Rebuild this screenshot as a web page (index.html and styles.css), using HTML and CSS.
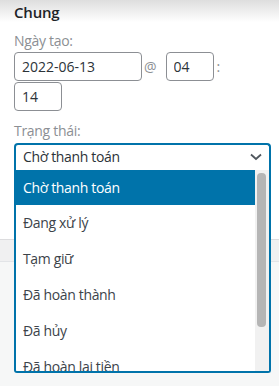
FILE: index.html
```html
<!DOCTYPE html>
<html lang="vi">
<head>
  <meta charset="UTF-8" />
  <meta name="viewport" content="width=device-width, initial-scale=1.0"/>
  <title>Đơn hàng</title>
  <link rel="stylesheet" href="styles.css">
</head>
<body>
  <div class="panel">
    <h3 class="section-title">Chung</h3>

    <label class="field-label" for="orderDate">Ngày tạo:</label>
    <div class="date-row">
      <input type="text" id="orderDate" class="date-input" value="2022-06-13" />
      <span class="sep at">@</span>
      <input type="text" class="time-input" value="04" />
      <span class="sep colon">:</span>
      <input type="text" class="time-input" value="14" />
    </div>

    <label class="field-label status-label">Trạng thái:</label>
    <div class="select-wrap">
      <div class="select-box">
        <span>Chờ thanh toán</span>
        <svg class="chevron" width="12" height="8" viewBox="0 0 12 8">
          <path d="M1 1.5 L6 6 L11 1.5" fill="none" stroke="#50575e" stroke-width="1.8"/>
        </svg>
      </div>
      <div class="select-list">
        <ul class="options">
          <li class="active">Chờ thanh toán</li>
          <li>Đang xử lý</li>
          <li>Tạm giữ</li>
          <li>Đã hoàn thành</li>
          <li>Đã hủy</li>
          <li>Đã hoàn lại tiền</li>
        </ul>
        <div class="scrollbar"><div class="thumb"></div></div>
      </div>
    </div>
  </div>
  <div class="band"></div>
</body>
</html>
```

FILE: styles.css
```css
* { box-sizing: border-box; }
body {
  margin: 0;
  font-family: 'Open Sans', 'Noto Sans', sans-serif;
  font-size: 14px;
  color: #2c3338;
  background: #f6f7f7;
  min-height: 100vh;
}

.panel {
  background: linear-gradient(#dedede 0, #fff 22px);
  padding: 0 8px 0 14px;
  height: 240px;
  border-bottom: 1px solid #dcdcde;
}

.section-title {
  margin: 0;
  font-size: 15px;
  line-height: 24px;
  font-weight: 600;
  color: #1d2327;
  letter-spacing: -0.2px;
}

.field-label {
  display: block;
  margin-top: 7px;
  line-height: 20px;
  color: #8c8f94;
  letter-spacing: -0.3px;
}

.status-label { margin-top: 10px; }

.date-row {
  display: flex;
  flex-wrap: wrap;
  align-items: center;
  row-gap: 1px;
  max-width: 250px;
  margin-top: 1px;
}

input {
  height: 29px;
  padding: 0 7px;
  font-family: inherit;
  font-size: 14px;
  color: #2c3338;
  border: 1px solid #8c8f94;
  border-radius: 4px;
  background: #fff;
}

.date-input { width: 128px; }
.time-input { width: 48px; }

.sep { color: #8c8f94; line-height: 20px; }
.at { margin: 0 9px 0 2px; }
.colon { margin-left: 3px; }

.select-wrap {
  position: relative;
  margin-top: 2px;
  width: 257px;
  letter-spacing: -0.35px;
}

.select-box {
  display: flex;
  align-items: center;
  justify-content: space-between;
  height: 27px;
  padding: 0 7px 2px 7px;
  border: 2px solid #0073aa;
  border-bottom: none;
  border-radius: 4px 4px 0 0;
  background: #fff;
}

.select-list {
  position: absolute;
  top: 100%;
  left: 0;
  right: 0;
  height: 203px;
  display: flex;
  overflow: hidden;
  background: #fff;
  border: 2px solid #0073aa;
  border-top: none;
  border-radius: 0 0 3px 3px;
}

.options {
  list-style: none;
  margin: 0;
  padding: 0;
  flex: 1;
}

.options li {
  height: 36px;
  line-height: 35px;
  padding-left: 7px;
  color: #3c434a;
  white-space: nowrap;
}

.options li.active {
  background: #0073aa;
  color: #fff;
  height: 35px;
}

.scrollbar {
  width: 14px;
  background: #f1f1f1;
  padding: 3px 3px 0 2px;
}

.thumb {
  height: 154px;
  background: #b5b5b5;
  border-radius: 4px;
}

.band {
  height: 22px;
  background: #f0f0f1;
  border-bottom: 1px solid #e2e4e7;
}
```
